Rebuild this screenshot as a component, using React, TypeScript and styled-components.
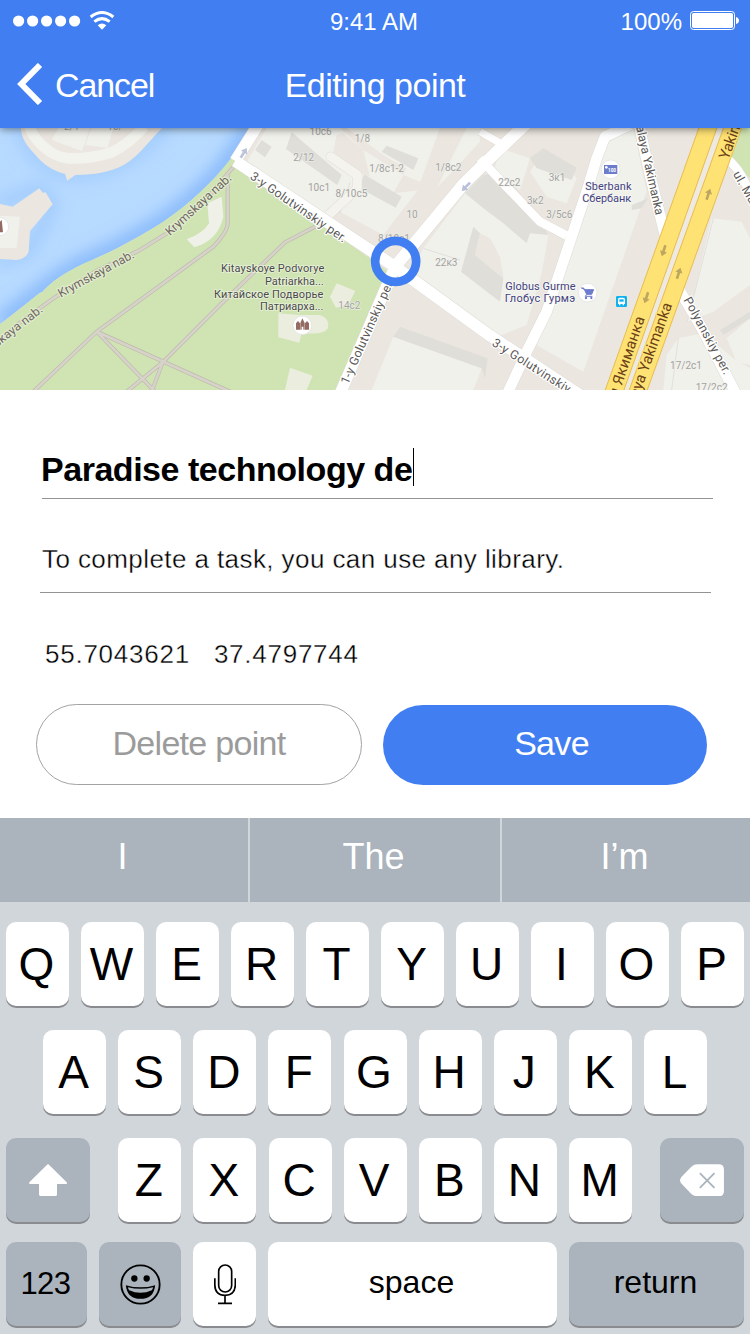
import React from "react";
import styled, { createGlobalStyle } from "styled-components";

const BLUE = "#407ef2";

const GlobalStyle = createGlobalStyle`
  * { box-sizing: border-box; }
  body {
    margin: 0;
    background: #fff;
    font-family: "Liberation Sans", Arial, sans-serif;
  }
  button { font-family: inherit; margin: 0; padding: 0; border: 0; }
`;

const Screen = styled.div`
  width: 750px;
  height: 1334px;
  display: flex;
  flex-direction: column;
  overflow: hidden;
  background: #fff;
`;

const Header = styled.header`
  position: relative;
  z-index: 1;
  flex: none;
  height: 128px;
  color: #fff;
  background: ${BLUE};
  box-shadow: 0 1px 8px rgba(0, 0, 0, 0.5);
`;

const StatusBar = styled.div`
  display: grid;
  grid-template-columns: 1fr auto 1fr;
  align-items: center;
  height: 44px;
  padding: 0 11px 0 13px;
  font-size: 24px;
  line-height: 28px;
`;

const StatusTime = styled.span`
  margin-right: 4px;
`;

const StatusGroup = styled.div<{ $end?: boolean }>`
  display: flex;
  align-items: center;
  gap: 8px;
  justify-content: ${(p) => (p.$end ? "flex-end" : "flex-start")};
  svg { display: block; margin-bottom: 3px; }
`;

const NavBar = styled.div`
  display: grid;
  grid-template-columns: 1fr auto 1fr;
  align-items: center;
  height: 84px;
  padding: 0 17px 2px;
  font-size: 34px;
`;

const BackButton = styled.button`
  display: flex;
  align-items: center;
  gap: 12px;
  color: #fff;
  background: none;
  font-size: 34px;
  letter-spacing: -1.1px;
  svg { display: block; margin-bottom: 2px; }
`;

const NavTitle = styled.h1`
  margin: 0;
  font-size: 34px;
  font-weight: 400;
  letter-spacing: -0.5px;
`;

const MapView = styled.div`
  flex: none;
  height: 262px;
  overflow: hidden;
  svg { display: block; }
`;

const Form = styled.main`
  flex: none;
  height: 428px;
`;

const TitleField = styled.div`
  display: flex;
  align-items: flex-start;
  width: 671px;
  height: 109px;
  margin-left: 42px;
  padding-top: 58px;
  border-bottom: 1px solid #929395;
`;

const TitleText = styled.span`
  margin-left: -1px;
  font-size: 34px;
  line-height: 42px;
  font-weight: 700;
  letter-spacing: -0.47px;
  white-space: pre;
`;

const Caret = styled.span`
  width: 1px;
  height: 38px;
  margin-left: 1px;
  background: #000;
`;

const NoteField = styled.div`
  width: 671px;
  height: 94px;
  margin-left: 40px;
  padding: 40px 0 0 2px;
  border-bottom: 1px solid #929395;
  font-size: 26px;
  line-height: 40px;
  letter-spacing: 0.42px;
  -webkit-text-stroke: 0.35px #fff;
  white-space: pre;
`;

const Coordinates = styled.div`
  display: flex;
  gap: 24px;
  height: 111px;
  padding: 41px 0 0 45px;
  font-size: 26px;
  line-height: 40px;
  letter-spacing: 0.75px;
  -webkit-text-stroke: 0.35px #fff;
`;

const Actions = styled.div`
  display: flex;
  align-items: flex-end;
  gap: 21px;
  padding-left: 36px;
`;

const ActionButton = styled.button<{ $primary?: boolean }>`
  width: ${(p) => (p.$primary ? 324 : 326)}px;
  height: ${(p) => (p.$primary ? 80 : 81)}px;
  padding: ${(p) => (p.$primary ? "0 0 3px 13px" : "0 0 3px")};
  border: ${(p) => (p.$primary ? "0" : "1px solid #a3a3a3")};
  border-radius: 41px;
  color: ${(p) => (p.$primary ? "#fff" : "#9b9b9b")};
  background: ${(p) => (p.$primary ? BLUE : "#fff")};
  font-size: 34px;
  letter-spacing: -0.7px;
`;

const Keyboard = styled.section`
  flex: none;
  height: 516px;
  background: #d1d6da;
`;

const Suggestions = styled.div`
  display: grid;
  grid-template-columns: 248px 250px 248px;
  gap: 2px;
  height: 84px;
`;

const Suggestion = styled.button`
  padding: 0 3px 7px 0;
  color: #fff;
  background: #abb3bd;
  font-size: 36px;
`;

const Row = styled.div<{ $top: number; $side: number }>`
  display: flex;
  justify-content: space-between;
  padding: ${(p) => `${p.$top}px ${p.$side}px 0`};
`;

const KeyGroup = styled.div`
  display: flex;
  justify-content: space-between;
  width: 514px;
  margin-left: 0.4px;
`;

const Key = styled.button<{ $w?: number; $dark?: boolean }>`
  display: flex;
  flex: none;
  align-items: center;
  justify-content: center;
  width: ${(p) => p.$w ?? 63}px;
  height: 84px;
  border-radius: 10px;
  color: #000;
  background: ${(p) => (p.$dark ? "#abb4bd" : "#fff")};
  box-shadow: 0 2px 0 #898b8f;
`;

const LetterKey = styled(Key)`
  padding-right: 2px;
  font-size: 46px;
`;

const WordKey = styled(Key)`
  padding: 0 2px 4px 0;
  font-size: 32px;
`;

const NumberKey = styled(Key)`
  padding-right: 2px;
  font-size: 31px;
  letter-spacing: -0.5px;
`;

const SignalIcon = () => (
  <svg width="68" height="12" viewBox="0 0 68 12" fill="#fff">
    {[5.6, 19.6, 33.6, 47.6, 61.6].map((x) => (
      <circle key={x} cx={x} cy="6" r="5.6" />
    ))}
  </svg>
);

const WifiIcon = () => (
  <svg width="26" height="19" viewBox="0 0 78 57" fill="none" stroke="#fff" strokeWidth="9">
    <path d="M5 18 Q39 -9 73 18" />
    <path d="M16 32 Q39 14 62 32" />
    <path d="M26 43 Q39 32 52 43 L39 56Z" fill="#fff" stroke="none" />
  </svg>
);

const BatteryIcon = () => (
  <svg width="49" height="19" viewBox="0 0 49 19">
    <rect x="0.5" y="0.5" width="44" height="18" rx="3" fill="none" stroke="#fff" />
    <rect x="2" y="2" width="41" height="15" rx="1.8" fill="#fff" />
    <path d="M46 6 Q49 7 49 9.5 T46 13Z" fill="#fff" />
  </svg>
);

const BackIcon = () => (
  <svg width="26" height="42" viewBox="0 0 26 42" fill="none" stroke="#fff" strokeWidth="6">
    <path d="M23 2 L4.3 21 L23 40" />
  </svg>
);

const ShiftIcon = () => (
  <svg width="38.4" height="32.6" viewBox="87 131 115 98" fill="#fff" stroke="#fff" strokeWidth="6" strokeLinejoin="round">
    <path d="M144 135 L198 188 H168 V222 Q168 225 165 225 H123 Q120 225 120 222 V188 H90Z" />
  </svg>
);

const DeleteIcon = () => (
  <svg width="44" height="32.6" viewBox="915 131 132 98">
    <path d="M968 132 H1031 Q1047 132 1047 148 V212 Q1047 228 1031 228 H968 Q957 228 949 221 L919 190 Q911 180 919 170 L949 139 Q957 132 968 132Z" fill="#fff" />
    <path d="M976 160 L1017 201 M1017 160 L976 201" fill="none" stroke="#abb4bd" strokeWidth="5.5" strokeLinecap="round" />
  </svg>
);

const EmojiIcon = () => (
  <svg width="41" height="41" viewBox="358.500 430.500 123 123">
    <circle cx="420" cy="492" r="57.500" fill="none" stroke="#000" strokeWidth="5.500" />
    <circle cx="401.500" cy="474" r="9.500" />
    <circle cx="438.500" cy="474" r="9.500" />
    <path d="M376 494 Q420 507 464 494 Q460 535 420 535 Q380 535 376 494Z" />
    <path d="M382 500 Q420 510 458 500 Q457 505 454 509 Q420 524 386 509 Q383 505 382 500Z" fill="#abb4bd" />
  </svg>
);

const MicIcon = () => (
  <svg width="23" height="41" viewBox="639 434 69 123" fill="none" stroke="#000" strokeWidth="5">
    <rect x="656" y="437" width="39" height="81" rx="19.500" />
    <path d="M644.500 477 V497 Q645 528 675 528 T706 497 V477 M675 528 V552 M654 552 H696" />
  </svg>
);

const BUILDINGS = [
  "155,45 175,9 270,9 246,78",
  "255,60 275,9 340,9 322,68",
  "0,272 60,275 50,370 0,368",
  "742,108 800,9 1020,9 1090,75 1210,150 1180,205 1310,190 1180,370 1125,340 1005,270 960,285",
  "1040,9 1250,9 1330,9 1250,150 1150,90",
  "1250,60 1310,9 1440,9 1440,50 1310,190 1210,150",
  "1480,145 1500,70 1590,100 1560,195",
  "1590,140 1630,80 1690,115 1730,160 1700,235 1640,215",
  "1395,205 1460,170 1645,330 1625,445 1580,600 1480,640 1250,495 1235,440 1270,370",
  "1810,60 1900,9 1940,200 1925,240 1750,740 1600,655 1690,400 1760,180",
  "2062,590 2135,280 2225,290 2250,340 2250,480 2140,560",
  "2000,690 2035,640 2110,625 2200,700 2250,730 2250,795 1990,795",
  "2180,640 2250,580 2250,720 2210,710",
  "1180,635 1445,730 1420,795 1115,795",
];

const SHADOWS = [
  "858,72 875,22 1025,150 1012,180",
  "765,75 785,45 815,65 795,97",
  "1092,148 1205,215 1187,248 1080,190",
  "1145,80 1160,62 1255,100 1240,135",
  "1590,100 1630,70 1730,128 1715,165 1610,130",
  "1395,205 1450,150 1480,145 1590,235 1645,330 1590,325 1580,355 1510,295 1450,250",
  "1383,440 1420,305 1440,325 1425,390 1510,460 1500,530",
  "1180,635 1200,605 1463,700 1455,760 1445,730",
  "1895,240 1945,220 1925,250 1895,255",
  "2160,615 2250,560 2250,580 2170,630",
];

const GAPS = [
  "1440,325 1470,340 1500,395 1510,458 1425,390",
  "1010,30 1030,25 1090,75 1110,155 1080,145 1000,80",
  "1320,9 1400,9 1310,190 1180,370 1150,330 1250,200",
  "1000,250 1140,325 1180,400 1110,385 970,290",
];

const LABELS: [number, number, string][] = [
  [962, 31, "10c6"], [1087, 50, "1/8"], [911, 107, "2/12"], [1160, 141, "1/8c1-2"],
  [1345, 139, "1/8c2"], [957, 199, "10c1"], [1054, 217, "8/10c5"], [1236, 280, "10"],
  [1182, 352, "8/10c1"], [1339, 422, "22к3"], [1048, 551, "14c2"], [1528, 182, "22c2"],
  [1671, 169, "3к1"], [1606, 238, "3к2"], [1678, 278, "3/5c6"], [2058, 731, "17/2c1"],
  [2135, 798, "17/2c2"], [215, 14, "2/1"], [345, 14, "10/"],
];

const WATER =
  "M0 0 H752 L697 95 C640 170 570 235 490 290 C420 335 350 372 270 408 C190 442 150 475 128 500 L118 505 C80 535 40 568 0 598Z";
const PARK =
  "M697 95 C640 170 570 235 490 290 C420 335 350 372 270 408 C190 442 150 475 128 500 L118 505 C80 535 40 568 0 598 V800 H1020 L1165 440 L710 110Z";
const PARK_PATHS =
  "M0 645 L50 600 L160 520 L290 437 L420 375 L500 325 L625 215 L705 120 M100 800 L290 620 L640 365 Q683 320 683 295 V150 M290 620 L690 800 M290 620 L465 800 M380 800 L488 712 L660 540 L855 352 L945 305 M488 712 L455 800";
const STREETS: [string, number][] = [
  ["M780 -10 L706 108", 34],
  ["M706 108 L1185 425 L1470 632 L1770 830", 35],
  ["M1185 425 L1010 830", 34],
  ["M1185 425 L1390 178 L1480 90 L1585 -10", 36],
  ["M1440 100 L1500 165 L1620 290 L1700 332", 26],
  ["M1440 20 L1510 60", 22],
  ["M1890 0 L1815 35 L1790 100 L1760 200 L1640 560 L1580 680 L1520 810", 32],
  ["M1915 -10 L1950 150 L1995 330", 32],
  ["M2035 490 L2100 600 L2210 810", 32],
  ["M2180 100 Q2225 135 2250 210", 26],
];
const YELLOW =
  "M2098 5 L2152 5 L1870 800 L1814 800Z M2172 5 L2226 5 L1940 800 L1886 800Z";

interface StreetNameProps {
  x: number;
  y: number;
  angle: number;
  length: number;
  color?: string;
  halo?: string;
  size?: number;
  children: string;
}

const StreetName = ({ x, y, angle, length, color = "#5c5957", halo = "#fff", size = 37, children }: StreetNameProps) => (
  <text
    transform={`translate(${x} ${y}) rotate(${angle})`}
    textLength={length}
    fontSize={size}
    fill={color}
    stroke={halo}
    strokeWidth="7"
    strokeLinejoin="round"
    paintOrder="stroke"
  >
    {children}
  </text>
);

const Arrow = ({ x, y, angle, color }: { x: number; y: number; angle: number; color: string }) => (
  <path
    transform={`translate(${x} ${y}) rotate(${angle})`}
    d="M0 -18 L11 -2 H4 V17 H-4 V-2 H-11Z"
    fill={color}
  />
);

const StreetMap = () => (
  <svg width="750" height="262" viewBox="0 9 2250 786" preserveAspectRatio="none" fontFamily="Roboto, sans-serif">
    <defs>
      <clipPath id="water"><path d={WATER} /></clipPath>
      <filter id="soft" x="-10%" y="-10%" width="120%" height="120%"><feGaussianBlur stdDeviation="24" /></filter>
    </defs>
    <rect width="2250" height="800" fill="#ebe6df" />
    <path d={WATER} fill="#b7daff" />
    <g clipPath="url(#water)">
      <path d="M760 0 L697 95 C640 170 570 235 490 290 C420 335 350 372 270 408 C190 442 128 500 0 598" fill="none" stroke="#86b8fb" strokeWidth="52" filter="url(#soft)" />
      <path d="M-10 237 L118 190 L158 238 L86 380 L-10 410 M62 0 Q80 110 200 150 Q380 150 500 0" fill="none" stroke="#9cc8fd" strokeWidth="30" filter="url(#soft)" />
      <path d="M62 0 Q62 40 90 72 L120 105 Q150 135 195 147 L202 167 L226 150 Q320 150 375 118 C420 90 440 55 490 5Z" fill="#ebe6df" />
      <path d="M88 0 Q92 28 125 60 Q165 98 205 100 Q275 102 335 82 Q390 55 432 5" fill="none" stroke="#f3f3ee" strokeWidth="32" />
      <path d="M0 237 L38 245 L118 190 L128 203 L137 202 L158 238 L90 318 L86 380 Q78 402 50 405 L0 402Z" fill="#ebe6df" />
    </g>
    <path d={PARK} fill="#cfe4b2" />
    <path d="M2178 0 H2250 V160 Q2210 115 2165 90Z" fill="#cfe4b2" />
    <path d={PARK_PATHS} fill="none" stroke="#bdb9ac" strokeWidth="12" />
    <path d={PARK_PATHS} fill="none" stroke="#d7d3ca" strokeWidth="8" />
    <g fill="#f1f1ec">
      {BUILDINGS.map((points) => <polygon key={points} points={points} />)}
    </g>
    <g fill="#ebe6df">
      {GAPS.map((points) => <polygon key={points} points={points} />)}
    </g>
    <g fill="#dfded9">
      {SHADOWS.map((points) => <polygon key={points} points={points} />)}
    </g>
    <path d="M1020 265 L1050 172 M1270 370 L1380 405 M2062 590 L2140 280 M2015 795 L2035 640" fill="none" stroke="#dad7d2" strokeWidth="2" />
    <path d="M992 95 L1072 150 V190 L970 285" fill="none" stroke="#e0ded8" strokeWidth="30" strokeLinecap="round" strokeLinejoin="round" />
    <path d="M992 95 L1072 150 V190 L970 285" fill="none" stroke="#f4f3ee" strokeWidth="27" strokeLinecap="round" strokeLinejoin="round" />
    <path d="M622 235 L665 215 L670 275 Q655 345 583 367 L560 343 Q610 325 627 295Z" fill="#eff1e8" />
    <path d="M1010 475 L1066 498 L1045 540 L1008 548 L990 515Z M835 565 L898 570 L960 570 Q990 580 984 610 Q968 632 905 623 L898 653 L835 637Z M870 728 L938 752 L920 795 H855Z" fill="#ebeedf" />
    <g fill="none" strokeLinejoin="round">
      {STREETS.map(([d, width]) => <path key={d} d={d} stroke="#dedbd6" strokeWidth={width + 3} />)}
      {STREETS.map(([d, width]) => <path key={d} d={d} stroke="#fff" strokeWidth={width} />)}
    </g>
    <path d="M2152 5 L2172 5 L1886 800 L1870 800Z" fill="#eee9e1" />
    <path d={YELLOW} fill="#ffe274" stroke="#e8bd50" strokeWidth="3" />

    <Arrow x={731} y={84} angle={32} color="#bcc4dc" />
    <Arrow x={1398} y={185} angle={225} color="#b7c0dc" />
    <Arrow x={1991} y={377} angle={198} color="#bda760" />
    <Arrow x={1939} y={518} angle={198} color="#bda760" />
    <Arrow x={2125} y={208} angle={18} color="#bda760" />
    <Arrow x={2036} y={445} angle={18} color="#bda760" />

    <g fontSize="30" fill="#a2a2a1" textAnchor="middle" stroke="#f2f2ed" strokeWidth="3" paintOrder="stroke">
      {LABELS.map(([x, y, label]) => <text key={label} x={x} y={y}>{label}</text>)}
    </g>

    <StreetName x={-78} y={721} angle={-38} length={265} halo="#e2edcf" color="#706862">Krymskaya nab.</StreetName>
    <StreetName x={182} y={518} angle={-28.500} length={254} halo="#e2edcf" color="#706862">Krymskaya nab.</StreetName>
    <StreetName x={510} y={334} angle={-42.5} length={254} halo="#e2edcf" color="#706862">Krymskaya nab.</StreetName>
    <StreetName x={748} y={160} angle={34.5} length={342}>3-y Golutvinskiy per.</StreetName>
    <StreetName x={1044} y={780} angle={-66} length={342}>1-y Golutvinskiy per.</StreetName>
    <StreetName x={1474} y={660} angle={32.5} length={345}>3-y Golutvinskiy per.</StreetName>
    <StreetName x={1901} y={-26} angle={77.5} length={305}>Malaya Yakimanka</StreetName>
    <StreetName x={2050} y={524} angle={61.500} length={258}>Polyanskiy per.</StreetName>
    <StreetName x={2198} y={147} angle={60} length={175}>ul. Malaya</StreetName>
    <StreetName x={1845} y={841} angle={-71} length={276} color="#6b3f16" halo="#ffe274" size={45}>ая Якиманка</StreetName>
    <StreetName x={1907} y={842} angle={-70} length={322} color="#6b3f16" halo="#ffe274" size={45}>naya Yakimanka</StreetName>
    <StreetName x={2185} y={106} angle={-70} length={214} color="#6b3f16" halo="#ffe274" size={45}>Yakimanka</StreetName>

    <g fontSize="33" textAnchor="end" fill="#4a4a49" stroke="#e8f1da" strokeWidth="5" paintOrder="stroke">
      <text x="973" y="440" textLength="310">Kitayskoye Podvorye</text>
      <text x="971" y="479" textLength="176">Patriarkha...</text>
      <text x="970" y="518" textLength="328">Китайское Подворье</text>
      <text x="970" y="556" textLength="190">Патриарха...</text>
    </g>
    <g fontSize="33" textAnchor="middle" fill="#42427f" stroke="#f7f7f3" strokeWidth="5" paintOrder="stroke">
      <text x="1825" y="194" textLength="139">Sberbank</text>
      <text x="1820" y="232" textLength="147">Сбербанк</text>
      <text x="1621" y="494" textLength="211">Globus Gurme</text>
      <text x="1620" y="532" textLength="211">Глобус Гурмэ</text>
    </g>

    <g fill="#fff" stroke="#dedede" strokeWidth="2">
      <circle cx="907" cy="601" r="28" />
      <circle cx="1832" cy="133" r="28" />
      <circle cx="1763" cy="503" r="28" />
      <circle cx="-1" cy="305" r="27" />
    </g>
    <path d="M888 614 V595 L894 588 L900 595 V614Z M901 614 V594 L907 580 L914 594 V614 H910 V605 H905 V614Z M915 614 V595 L921 588 L927 595 V614Z M0 290 L5 284 L9 322 H0Z" fill="#936b63" />
    <rect x="1812" y="120" width="40" height="27" fill="#6e7ccc" />
    <circle cx="1819" cy="127" r="4" fill="#fff" />
    <text x="1836" y="142" fontSize="14" fontWeight="700" fill="#fff" textAnchor="middle">100</text>
    <path d="M1744 489 H1751 L1760 508 H1775 L1781 494 H1755Z" fill="#6e7ccc" stroke="#6e7ccc" strokeWidth="3" />
    <path d="M1760 508 L1756 514 H1777" fill="none" stroke="#6e7ccc" strokeWidth="3" />
    <circle cx="1758" cy="519" r="3.500" fill="#6e7ccc" />
    <circle cx="1774" cy="519" r="3.500" fill="#6e7ccc" />
    <rect x="1848" y="513" width="33" height="33" rx="4" fill="#10b3ee" />
    <path d="M1854 523 Q1854 518 1860 518 H1869 Q1875 518 1875 523 V537 H1872 V541 H1868 V537 H1861 V541 H1857 V537 H1854Z" fill="#fff" />
    <path d="M1858 523 H1871 V530 H1858Z" fill="#10b3ee" />

    <circle cx="1187" cy="409" r="61.500" fill="none" stroke={BLUE} strokeWidth="26" />
  </svg>
);

export default function App() {
  return (
    <>
      <GlobalStyle />
      <Screen>
        <Header>
          <StatusBar>
            <StatusGroup><SignalIcon /><WifiIcon /></StatusGroup>
            <StatusTime>9:41 AM</StatusTime>
            <StatusGroup $end><span>100%</span><BatteryIcon /></StatusGroup>
          </StatusBar>
          <NavBar>
            <BackButton><BackIcon />Cancel</BackButton>
            <NavTitle>Editing point</NavTitle>
          </NavBar>
        </Header>
        <MapView><StreetMap /></MapView>
        <Form>
          <TitleField>
            <TitleText>Paradise technology de</TitleText>
            <Caret />
          </TitleField>
          <NoteField>To complete a task, you can use any library.</NoteField>
          <Coordinates>
            <span>55.7043621</span>
            <span>37.4797744</span>
          </Coordinates>
          <Actions>
            <ActionButton>Delete point</ActionButton>
            <ActionButton $primary>Save</ActionButton>
          </Actions>
        </Form>
        <Keyboard>
          <Suggestions>
            <Suggestion>I</Suggestion>
            <Suggestion>The</Suggestion>
            <Suggestion>I’m</Suggestion>
          </Suggestions>
          <Row $top={20} $side={6}>
            {[..."QWERTYUIOP"].map((c) => <LetterKey key={c}>{c}</LetterKey>)}
          </Row>
          <Row $top={24} $side={43}>
            {[..."ASDFGHJKL"].map((c) => <LetterKey key={c}>{c}</LetterKey>)}
          </Row>
          <Row $top={24} $side={6}>
            <Key $w={84} $dark aria-label="Shift"><ShiftIcon /></Key>
            <KeyGroup>
              {[..."ZXCVBNM"].map((c) => <LetterKey key={c}>{c}</LetterKey>)}
            </KeyGroup>
            <Key $w={84} $dark aria-label="Delete"><DeleteIcon /></Key>
          </Row>
          <Row $top={20} $side={6}>
            <NumberKey $w={81} $dark>123</NumberKey>
            <Key $w={82} $dark aria-label="Emoji"><EmojiIcon /></Key>
            <Key aria-label="Dictation"><MicIcon /></Key>
            <WordKey $w={289}>space</WordKey>
            <WordKey $w={175} $dark>return</WordKey>
          </Row>
        </Keyboard>
      </Screen>
    </>
  );
}
